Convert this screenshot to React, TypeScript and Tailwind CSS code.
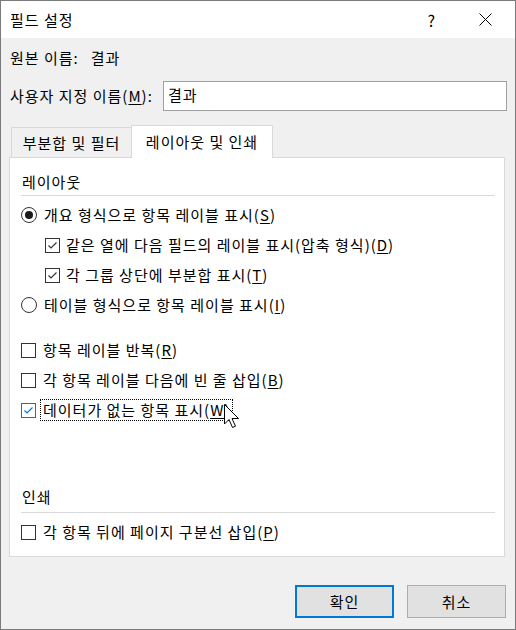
import type { ReactNode } from 'react'

const FONT = "font-['Noto_Sans_CJK_KR','Malgun_Gothic',sans-serif]"

function Mn({ children }: { children: ReactNode }) {
  return <span className="underline underline-offset-2 decoration-1">{children}</span>
}

function Check({ checked, focus }: { checked?: boolean; focus?: boolean }) {
  const c = focus ? '#0078d7' : '#333333'
  return (
    <span
      className={
        'flex h-[15px] w-[15px] shrink-0 items-center justify-center border bg-white ' +
        (focus ? 'border-[#0078d7]' : 'border-[#333333]')
      }
    >
      {checked && (
        <svg width="13" height="13" viewBox="0 0 13 13">
          <path d="M2.5 6.5 L5 9 L10.5 3.5" fill="none" stroke={c} strokeWidth="1.2" />
        </svg>
      )}
    </span>
  )
}

function Radio({ checked }: { checked?: boolean }) {
  return (
    <span className="flex h-[16px] w-[16px] shrink-0 items-center justify-center rounded-full border border-[#333333] bg-white">
      {checked && <span className="h-[8px] w-[8px] rounded-full bg-[#1a1a1a]" />}
    </span>
  )
}

function Row({ indent, children, control }: { indent?: boolean; children: ReactNode; control: ReactNode }) {
  return (
    <div className={'flex h-[30px] items-center ' + (indent ? 'pl-[35px] gap-[6px]' : 'pl-[11px] gap-[7px]')}>
      {control}
      <span className="whitespace-nowrap">{children}</span>
    </div>
  )
}

function Cursor() {
  return (
    <svg className="absolute left-[223px] top-[403px]" width="17" height="26" viewBox="0 0 17 26">
      <path
        d="M0.5 0.5 L0.5 20 L5 15.5 L8.5 23.5 L11.5 22.2 L8 14.5 L14.5 14.5 Z"
        fill="#ffffff"
        stroke="#000000"
        strokeWidth="1"
      />
    </svg>
  )
}

export default function App() {
  return (
    <div className={`${FONT} relative flex h-[630px] w-[516px] flex-col border border-[#7a7a7a] bg-[#f0f0f0] text-[15px] leading-[20px] tracking-[1px] text-black`}>
      {/* Title bar */}
      <div className="flex h-[37px] items-center bg-white pl-[9px]">
        <span className="text-[15px]">필드 설정</span>
        <span className="ml-auto mr-[43px] text-[16px]">?</span>
        <svg className="mr-[23px]" width="13" height="13" viewBox="0 0 13 13">
          <path d="M0.5 0.5 L12.5 12.5 M12.5 0.5 L0.5 12.5" stroke="#000" strokeWidth="1" />
        </svg>
      </div>

      <div className="flex flex-1 flex-col pl-[8px] pr-[8px]">
        <div className="mt-[10px] flex h-[20px] items-center pl-[1px]">
          <span>원본 이름:</span>
          <span className="ml-[12px]">결과</span>
        </div>

        <div className="mt-[13px] flex h-[30px] items-center pl-[1px]">
          <span className="w-[153px] shrink-0 whitespace-nowrap">
            사용자 지정 이름(<Mn>M</Mn>):
          </span>
          <div className="flex h-[30px] flex-1 items-start border border-[#a0a0a0] bg-white pl-[4px] pt-[3px]">
            결과
          </div>
        </div>

        {/* Tabs */}
        <div className="mt-[14px] flex items-end pl-[2px]">
          <div className="flex h-[30px] w-[120px] items-center justify-center border-l border-t border-[#d9d9d9]">
            부분합 및 필터
          </div>
          <div className="relative z-10 -mb-px flex h-[33px] w-[142px] items-center justify-center border-x border-t border-[#d9d9d9] bg-white pb-[1px]">
            레이아웃 및 인쇄
          </div>
        </div>

        <div className="mr-[2px] flex h-[400px] flex-col border border-[#d9d9d9] bg-white">
          <div className="mt-[14px] pl-[12px]">레이아웃</div>
          <div className="ml-[11px] mr-[9px] mt-[3px] h-px bg-[#d9d9d9]" />
          <div className="mt-[4px]">
            <Row control={<Radio checked />}>
              개요 형식으로 항목 레이블 표시(<Mn>S</Mn>)
            </Row>
            <Row indent control={<Check checked />}>
              같은 열에 다음 필드의 레이블 표시(압축 형식)(<Mn>D</Mn>)
            </Row>
            <Row indent control={<Check checked />}>
              각 그룹 상단에 부분합 표시(<Mn>T</Mn>)
            </Row>
            <Row control={<Radio />}>
              테이블 형식으로 항목 레이블 표시(<Mn>I</Mn>)
            </Row>
          </div>
          <div className="mt-[15px]">
            <Row control={<Check />}>
              항목 레이블 반복(<Mn>R</Mn>)
            </Row>
            <Row control={<Check />}>
              각 항목 레이블 다음에 빈 줄 삽입(<Mn>B</Mn>)
            </Row>
            <div className="flex h-[30px] items-center gap-[4px] pl-[11px]">
              <Check checked focus />
              <span className="flex h-[22px] items-center whitespace-nowrap border border-dotted border-black px-[2px]">
                데이터가 없는 항목 표시(<Mn>W</Mn>)
              </span>
            </div>
          </div>
          <div className="mt-[62px] pl-[12px]">인쇄</div>
          <div className="ml-[11px] mr-[9px] mt-[5px] h-px bg-[#d9d9d9]" />
          <div className="mt-[4px]">
            <Row control={<Check />}>
              각 항목 뒤에 페이지 구분선 삽입(<Mn>P</Mn>)
            </Row>
          </div>
        </div>

        <div className="mt-[28px] flex justify-end gap-[13px] pr-[1px]">
          <button className="flex h-[33px] w-[99px] items-center justify-center border-2 border-[#0078d7] bg-[#e1e1e1]">
            확인
          </button>
          <button className="flex h-[33px] w-[99px] items-center justify-center border border-[#adadad] bg-[#e1e1e1]">
            취소
          </button>
        </div>
      </div>
      <Cursor />
    </div>
  )
}
